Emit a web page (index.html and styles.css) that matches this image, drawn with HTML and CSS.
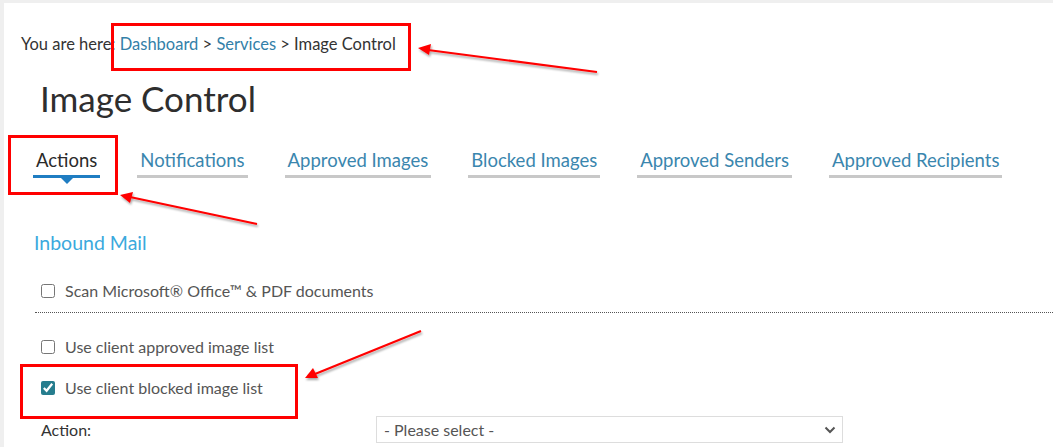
FILE: index.html
```html
<!DOCTYPE html>
<html>
    <head>
        <link rel="stylesheet" href="styles.css">
    </head>
    <body>
        <section class="page">
            <div class="breadcrumb">
                You are here: <a href="#">Dashboard</a> &gt; <a href="#">Services</a> &gt; Image Control
            </div>
            <h1>Image Control</h1>
            <nav class="tabs">
                <a class="tab active" href="#">Actions</a>
                <a class="tab" href="#">Notifications</a>
                <a class="tab" href="#">Approved Images</a>
                <a class="tab" href="#">Blocked Images</a>
                <a class="tab" href="#">Approved Senders</a>
                <a class="tab" href="#">Approved Recipients</a>
            </nav>
            <h2>Inbound Mail</h2>
            <div class="option first">
                <label><input type="checkbox"> Scan Microsoft&reg; Office&trade; &amp; PDF documents</label>
            </div>
            <div class="option second">
                <label><input type="checkbox"> Use client approved image list</label>
            </div>
            <div class="option third">
                <label><input type="checkbox" checked> Use client blocked image list</label>
            </div>
            <div class="field">
                <span class="field-label">Action:</span>
                <div class="select">
                    <span>- Please select -</span>
                    <svg width="12" height="8" viewBox="0 0 12 8"><path d="M1.5 1.5 L6 6 L10.5 1.5" fill="none" stroke="#555" stroke-width="2"/></svg>
                </div>
            </div>

            <!-- annotations -->
            <div class="mark mark-crumb"></div>
            <div class="mark mark-tab"></div>
            <div class="mark mark-check"></div>
            <svg class="arrows" width="1053" height="447">
                <defs>
                    <filter id="shadow" x="-10%" y="-50%" width="120%" height="200%">
                        <feDropShadow dx="1" dy="2" stdDeviation="1.2" flood-color="#000" flood-opacity="0.35"/>
                    </filter>
                </defs>
                <g filter="url(#shadow)" fill="#f00" stroke="#f00">
                    <line x1="597" y1="72" x2="428" y2="50" stroke-width="2"/>
                    <polygon points="418,48 431,44 429,55" stroke="none"/>
                    <line x1="257" y1="224" x2="130" y2="197" stroke-width="2"/>
                    <polygon points="120,195 133,192 130,203" stroke="none"/>
                    <line x1="421" y1="331" x2="315" y2="374" stroke-width="2"/>
                    <polygon points="305,378 313,368 318,378" stroke="none"/>
                </g>
            </svg>
        </section>
    </body>
</html>
```

FILE: styles.css
```css
body{
    margin: 0;
    background-color: #efefef;
    font-family: Lato, "Open Sans", sans-serif;
    color: #333;
}

.page{
    position: relative;
    margin: 3px 0 0 4px;
    height: 444px;
    background-color: #fff;
    overflow: hidden;
}

.breadcrumb{
    padding: 31px 0 0 17px;
    font-size: 16.5px;
    line-height: 20px;
    color: #333;
}

.breadcrumb a{
    color: #3380a8;
    text-decoration: none;
}

h1{
    margin: 24px 0 0 36px;
    font-size: 35px;
    font-weight: 400;
    line-height: 40px;
    color: #2e2e2e;
}

.tabs{
    display: flex;
    gap: 37px;
    margin: 28px 0 0 29px;
}

.tab{
    position: relative;
    padding: 2px 3px 3px;
    border-bottom: 3px solid #c8c8c8;
    font-size: 18.5px;
    line-height: 24px;
    color: #3a86ae;
    text-decoration: none;
}

.tab.active{
    color: #2a2a2a;
    border-bottom-color: #1f7dc2;
}

.tab.active::after{
    content: "";
    position: absolute;
    left: 50%;
    bottom: -9px;
    margin-left: -6px;
    border-left: 6px solid transparent;
    border-right: 6px solid transparent;
    border-top: 6px solid #1f7dc2;
}

h2{
    margin: 53px 0 0 30px;
    font-size: 19.5px;
    font-weight: 400;
    line-height: 24px;
    color: #3ba9dd;
}

.option{
    padding-left: 37px;
    font-size: 16px;
    line-height: 22px;
    color: #555;
}

.option label{
    display: flex;
    align-items: center;
    gap: 10px;
}

.option input{
    width: 14px;
    height: 14px;
    margin: 0;
    accent-color: #267d8e;
}

.option.first{
    margin-top: 25px;
    padding-bottom: 10px;
    border-bottom: 1px dotted #555;
    margin-left: 31px;
    padding-left: 6px;
}

.option.second{
    margin-top: 23px;
}

.option.third{
    margin-top: 19px;
}

.field{
    display: flex;
    align-items: center;
    margin-top: 17px;
    padding-left: 37px;
    font-size: 16px;
    color: #333;
}

.field-label{
    width: 335px;
}

.select{
    display: flex;
    justify-content: space-between;
    align-items: center;
    width: 452px;
    height: 25px;
    padding: 0 6px 0 7px;
    border: 1px solid #ddd;
    color: #555;
}

.mark{
    position: absolute;
    border: 3px solid #f00;
}

.mark-crumb{
    left: 107px;
    top: 20px;
    width: 294px;
    height: 42px;
}

.mark-tab{
    left: 4px;
    top: 132px;
    width: 104px;
    height: 54px;
}

.mark-check{
    left: 16px;
    top: 361px;
    width: 272px;
    height: 49px;
}

.arrows{
    position: absolute;
    left: -4px;
    top: -3px;
}
```
